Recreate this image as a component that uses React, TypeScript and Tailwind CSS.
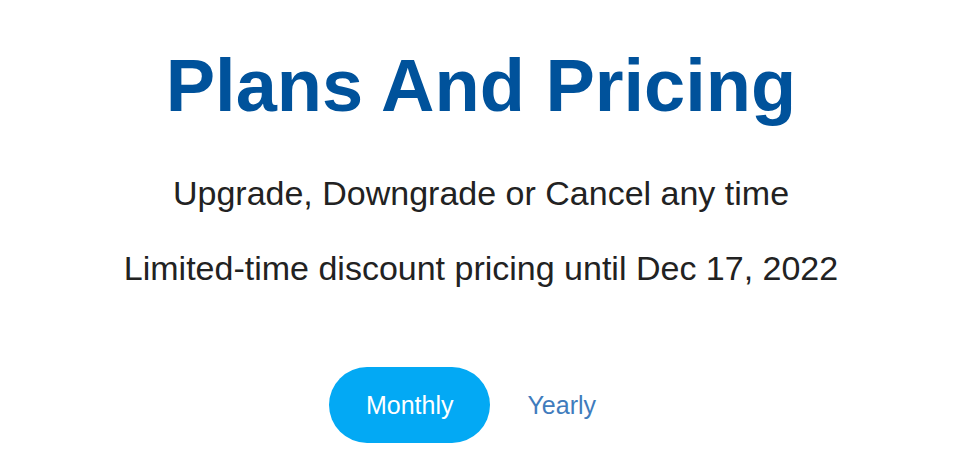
import React, { useState } from 'react';

const App: React.FC = () => {
    const [billing, setBilling] = useState<'monthly' | 'yearly'>('monthly');

    return (
        <div className="min-h-screen w-full bg-white flex flex-col items-center pr-[13px] font-['Liberation_Sans',Arial,sans-serif]">
            {/* Heading */}
            <h1 className="mt-[49px] text-[74px] leading-none font-bold text-[#00529b]">
                Plans And Pricing
            </h1>
            <p className="mt-[53px] text-[34px] leading-none text-[#222222]">
                Upgrade, Downgrade or Cancel any time
            </p>
            <p className="mt-[41px] text-[34px] leading-none text-[#222222]">
                Limited-time discount pricing until Dec 17, 2022
            </p>

            {/* Billing toggle */}
            <div className="mt-[82px] flex items-center">
                <button
                    onClick={() => setBilling('monthly')}
                    className={`h-[76px] px-[37px] rounded-full text-[25px] leading-none ${
                        billing === 'monthly' ? 'bg-[#03a9f4] text-white' : 'bg-transparent text-[#3f7cbd]'
                    }`}
                >
                    Monthly
                </button>
                <button
                    onClick={() => setBilling('yearly')}
                    className={`h-[76px] px-[37px] rounded-full text-[25px] leading-none ${
                        billing === 'yearly' ? 'bg-[#03a9f4] text-white' : 'bg-transparent text-[#3f7cbd]'
                    }`}
                >
                    Yearly
                </button>
            </div>
        </div>
    );
};

export default App;
